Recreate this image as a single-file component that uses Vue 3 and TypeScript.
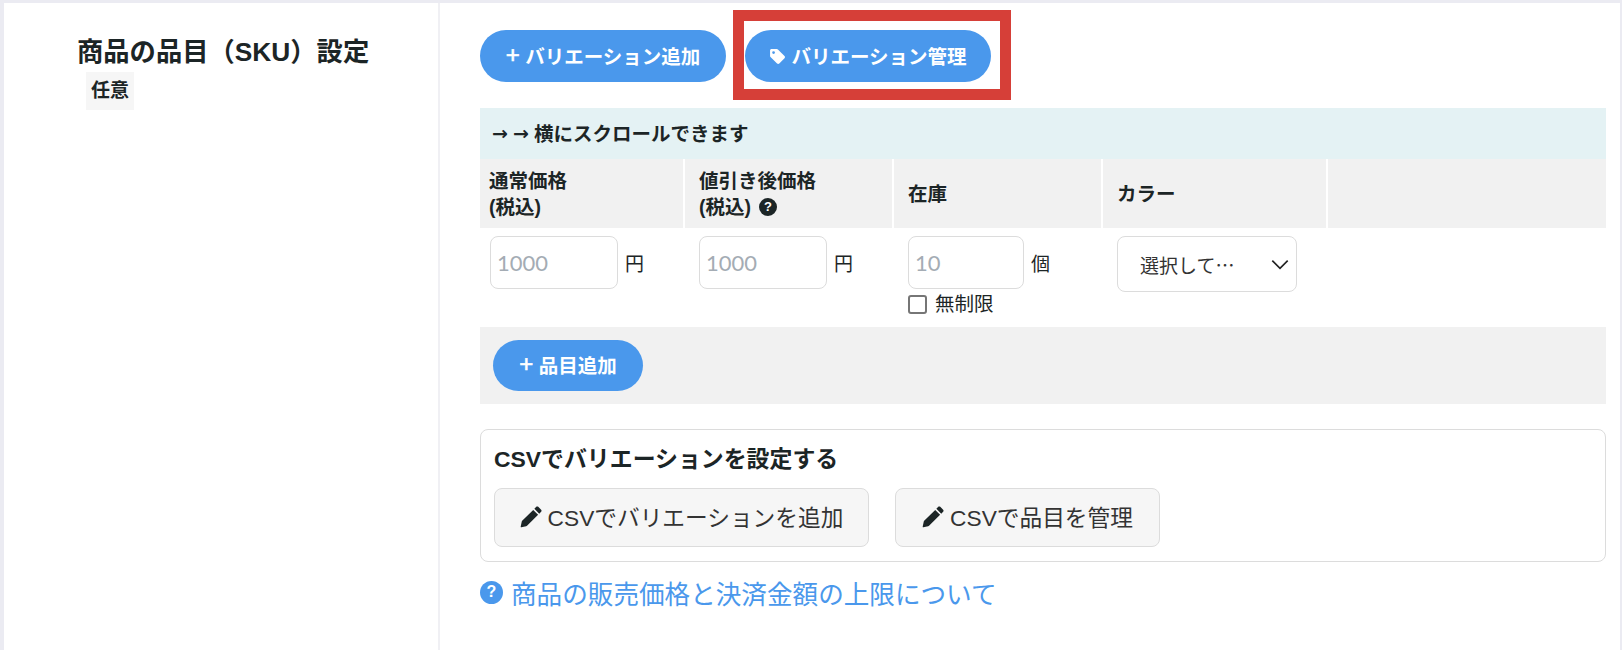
<script setup lang="ts">
interface Col { title: string[]; help?: boolean }
const cols: Col[] = [
  { title: ['通常価格', '(税込)'] },
  { title: ['値引き後価格', '(税込)'], help: true },
  { title: ['在庫'] },
  { title: ['カラー'] },
  { title: [] },
]
</script>

<template>
  <div class="card">
    <aside class="side">
      <h2 class="side-title">商品の品目（SKU）設定</h2>
      <span class="tag">任意</span>
    </aside>
    <main class="main">
      <div class="actions">
        <button class="pill pill-add" type="button"><span class="plus">+</span> バリエーション追加</button>
        <button class="pill pill-manage" type="button">
          <svg class="tag-icon" viewBox="0 0 16 16" aria-hidden="true">
            <path fill="#fff" fill-rule="evenodd" d="M1 2.400C1 1.600 1.600 1 2.400 1h4.900c.4 0 .8.2 1.100.4l6.200 6.200c.6.6.6 1.500 0 2.100l-4.900 4.900c-.6.6-1.500.6-2.100 0L1.400 8.400C1.100 8.100 1 7.700 1 7.300V2.400zM4.300 3a1.300 1.300 0 1 0 0 2.600 1.300 1.300 0 0 0 0-2.600z" />
          </svg>
          バリエーション管理
          <span class="callout" />
        </button>
      </div>

      <div class="scroll-note"><span class="arrow">→</span><span class="arrow">→</span>横にスクロールできます</div>

      <div class="sku-grid">
        <div v-for="(c, i) in cols" :key="i" class="head">
          <div class="head-text">
            <div v-for="line in c.title.slice(0, 1)" :key="line">{{ line }}</div>
            <div v-if="c.title[1]" class="head-line2">
              {{ c.title[1] }}
              <span v-if="c.help" class="help help-dark">?</span>
            </div>
          </div>
        </div>

        <div class="cell">
          <div class="field">
            <input class="num num-price" placeholder="1000" />
            <span class="unit">円</span>
          </div>
        </div>
        <div class="cell">
          <div class="field">
            <input class="num num-price" placeholder="1000" />
            <span class="unit">円</span>
          </div>
        </div>
        <div class="cell">
          <div class="field">
            <input class="num num-stock" placeholder="10" />
            <span class="unit">個</span>
          </div>
          <label class="unlimited"><input type="checkbox" class="check" />無制限</label>
        </div>
        <div class="cell">
          <div class="select">
            <span>選択して…</span>
            <svg class="chevron" viewBox="0 0 16 10" aria-hidden="true">
              <path d="M1 1.500 8 8.500 15 1.500" fill="none" stroke="#222" stroke-width="1.500" />
            </svg>
          </div>
        </div>
        <div class="cell" />
      </div>

      <div class="add-row">
        <button class="pill pill-item" type="button"><span class="plus">+</span> 品目追加</button>
      </div>

      <section class="csv">
        <h3 class="csv-title">CSVでバリエーションを設定する</h3>
        <div class="csv-actions">
          <button class="csv-btn csv-btn-a" type="button">
            <svg class="pencil" viewBox="0 0 16 16" aria-hidden="true">
              <path fill="#1c2526" d="M11.300 1.300c.4-.4 1-.4 1.400 0l2 2c.4.4.4 1 0 1.400l-1.300 1.300-3.400-3.400 1.300-1.300zM9.200 3.400l3.400 3.400-7.700 7.700c-.2.2-.4.300-.6.300L1 15.500c-.4.1-.6-.2-.5-.6l.7-3.300c0-.2.1-.4.300-.6l7.700-7.600z" />
            </svg>
            CSVでバリエーションを追加
          </button>
          <button class="csv-btn csv-btn-b" type="button">
            <svg class="pencil" viewBox="0 0 16 16" aria-hidden="true">
              <path fill="#1c2526" d="M11.300 1.300c.4-.4 1-.4 1.400 0l2 2c.4.4.4 1 0 1.400l-1.300 1.300-3.400-3.400 1.300-1.300zM9.200 3.400l3.400 3.400-7.700 7.700c-.2.2-.4.300-.6.300L1 15.500c-.4.1-.6-.2-.5-.6l.7-3.300c0-.2.1-.4.300-.6l7.700-7.600z" />
            </svg>
            CSVで品目を管理
          </button>
        </div>
      </section>

      <a class="limit-link" href="#">
        <span class="help help-blue">?</span>
        商品の販売価格と決済金額の上限について
      </a>
    </main>
  </div>
</template>

<style>
html, body { margin: 0; background: #ebebf2; }
</style>

<style scoped>
.card {
  box-sizing: border-box;
  display: flex;
  width: 1616px;
  height: 647px;
  margin: 3px 2px 0 4px;
  overflow: hidden;
  background: #fff;
  color: #1c2526;
  font-family: "Liberation Sans", "Noto Sans CJK JP", sans-serif;
  font-size: 19.500px;
}
.side {
  box-sizing: border-box;
  flex: 0 0 436px;
  padding: 30px 0 0 73px;
  border-right: 2px solid #f0f0f4;
}
.side-title {
  margin: 0;
  font-size: 26.300px;
  line-height: 38px;
  font-weight: 700;
  white-space: nowrap;
}
.tag {
  display: inline-block;
  margin: 1px 0 0 9px;
  padding: 0 5px;
  height: 38px;
  line-height: 38px;
  background: #f6f6f6;
  font-size: 19px;
  font-weight: 700;
}
.main {
  flex: 1;
  min-width: 0;
  padding: 27px 14px 0 40px;
}
.actions {
  display: flex;
  gap: 19px;
  height: 78px;
  align-items: flex-start;
}
.pill {
  position: relative;
  display: inline-flex;
  align-items: center;
  justify-content: center;
  border: 0;
  border-radius: 26px;
  background: #4a98ec;
  color: #fff;
  font: inherit;
  font-weight: 700;
  white-space: pre;
  padding: 0 0 2px;
}
.plus { font-size: 24px; line-height: 1; font-weight: 400; -webkit-text-stroke: 0.6px #fff; }
.pill-add, .pill-manage {
  width: 246px;
  height: 52px;
}
.pill-manage { gap: 5px; white-space: nowrap; }
.pill-item {
  width: 150px;
  height: 51px;
  padding-bottom: 3px;
}
.tag-icon { width: 17px; height: 17px; margin-top: 2px; }
.callout {
  position: absolute;
  left: -12px;
  top: -20px;
  width: 278px;
  height: 90px;
  box-sizing: border-box;
  border: 11px solid #d63f38;
  pointer-events: none;
}
.scroll-note {
  display: flex;
  align-items: center;
  height: 51px;
  padding: 0 0 2px 12px;
  box-sizing: border-box;
  background: #e4f2f4;
  font-weight: 700;
}
.arrow {
  width: 21px;
  font-family: "DejaVu Sans", sans-serif;
  font-size: 19px;
  font-weight: 700;
}
.sku-grid {
  display: grid;
  grid-template-columns: 203px 207px 207px 223px 1fr;
  column-gap: 2px;
}
.head {
  display: flex;
  align-items: center;
  height: 69px;
  padding-left: 9px;
  background: #f1f1f1;
  font-weight: 700;
}
.head:nth-child(2), .head:nth-child(3), .head:nth-child(4) { padding-left: 14px; }
.head-text { line-height: 26px; }
.head-line2 { display: flex; align-items: center; gap: 8px; }
.cell {
  box-sizing: border-box;
  height: 99px;
  padding: 8px 0 0 10px;
}
.cell:nth-child(7), .cell:nth-child(8), .cell:nth-child(9) { padding-left: 14px; }
.field {
  display: flex;
  align-items: center;
  gap: 7px;
}
.num {
  box-sizing: border-box;
  height: 53px;
  padding: 0 6px;
  border: 1.500px solid #dcdcdc;
  border-radius: 8px;
  background: #fff;
  font-family: Lato, "Liberation Sans", sans-serif;
  font-size: 22px;
  outline: none;
}
.num::placeholder { color: #a4acb4; opacity: 1; }
.num-price { width: 128px; }
.num-stock { width: 116px; }
.unit { font-size: 19px; }
.unlimited {
  display: flex;
  align-items: center;
  gap: 8px;
  margin-top: 5px;
  line-height: 20px;
  font-size: 19.500px;
}
.check {
  appearance: none;
  box-sizing: border-box;
  width: 19px;
  height: 19px;
  margin: 0;
  border: 2px solid #767676;
  border-radius: 3px;
  background: #fff;
}
.select {
  box-sizing: border-box;
  display: flex;
  align-items: center;
  justify-content: space-between;
  width: 180px;
  height: 56px;
  padding: 0 7px 0 22px;
  border: 1.500px solid #dcdcdc;
  border-radius: 8px;
  color: #333;
  font-family: "Noto Sans CJK JP", sans-serif;
  font-size: 19px;
}
.chevron { width: 18px; height: 11px; }
.add-row {
  display: flex;
  align-items: center;
  height: 77px;
  padding-left: 13px;
  background: #f1f1f1;
}
.csv {
  box-sizing: border-box;
  height: 133px;
  margin-top: 25px;
  padding: 13px 13px 0;
  border: 1.500px solid #dcdcdc;
  border-radius: 8px;
}
.csv-title {
  margin: 0;
  font-size: 22.900px;
  line-height: 32px;
  font-weight: 700;
}
.csv-actions {
  display: flex;
  gap: 26px;
  margin-top: 13px;
}
.csv-btn {
  display: inline-flex;
  align-items: center;
  justify-content: center;
  gap: 5px;
  height: 59px;
  padding: 0 0 2px;
  border: 1.500px solid #dcdcdc;
  border-radius: 8px;
  background: #f6f6f6;
  color: #333;
  font-family: inherit;
  font-size: 22.700px;
  white-space: nowrap;
}
.csv-btn-a { width: 375px; }
.csv-btn-b { width: 265px; }
.pencil { width: 23px; height: 23px; }
.limit-link {
  display: flex;
  align-items: center;
  gap: 8px;
  margin-top: 14px;
  height: 32px;
  color: #4a98ec;
  font-size: 25.600px;
  text-decoration: none;
  white-space: nowrap;
}
.help {
  display: inline-flex;
  align-items: center;
  justify-content: center;
  border-radius: 50%;
  color: #fff;
  font-weight: 700;
}
.help-dark {
  width: 18px;
  height: 18px;
  background: #1c2526;
  font-size: 13px;
}
.help-blue {
  width: 23px;
  height: 23px;
  background: #4a98ec;
  font-size: 16px;
}
</style>
